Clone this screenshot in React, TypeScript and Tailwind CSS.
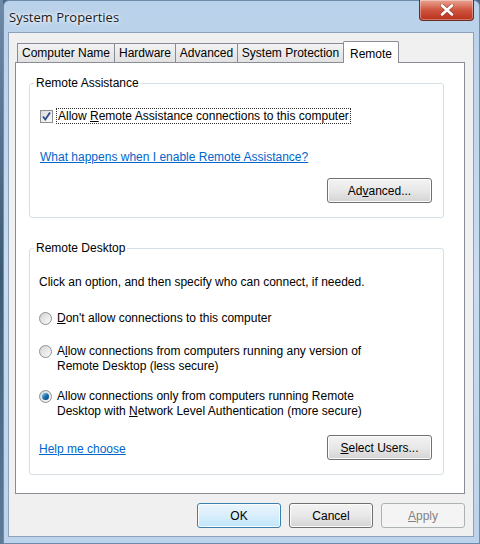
import React from "react";

const sans = "font-['Liberation_Sans',Arial,sans-serif]";

function Btn({ label, u, className = "" }: { label: string; u?: number; className?: string }) {
  const text =
    u === undefined ? (
      label
    ) : (
      <>
        {label.slice(0, u)}
        <span className="underline">{label[u]}</span>
        {label.slice(u + 1)}
      </>
    );
  return (
    <div
      className={`h-[25px] flex items-center justify-center rounded-[3px] border border-[#707070] bg-gradient-to-b from-[#f3f3f3] via-[#e8e8e8] to-[#d4d4d4] text-[12px] text-black shadow-[inset_0_0_0_1px_#fcfcfc] ${className}`}
    >
      {text}
    </div>
  );
}

function Radio({ checked }: { checked?: boolean }) {
  return (
    <div className="w-[13px] h-[13px] shrink-0 rounded-full border border-[#8e8f8f] bg-gradient-to-br from-[#d4d4d4] to-[#fbfbfb] flex items-center justify-center">
      {checked && (
        <div className="w-[7px] h-[7px] rounded-full bg-gradient-to-br from-[#8ad2f8] via-[#1a6fb0] to-[#0b3a6e]" />
      )}
    </div>
  );
}

function Tab({ label, w, active }: { label: string; w: number; active?: boolean }) {
  if (active) {
    return (
      <div
        style={{ width: w }}
        className="h-[22px] -mb-px -ml-px z-10 bg-white border border-b-0 border-[#898c95] rounded-t-[2px] flex items-start justify-center pt-[3px] text-[12px]"
      >
        {label}
      </div>
    );
  }
  return (
    <div
      style={{ width: w }}
      className="h-[19px] mt-[2px] -ml-px first:ml-0 border border-b-0 border-[#898c95] bg-gradient-to-b from-[#f3f3f3] to-[#e1e1e1] flex items-center justify-center text-[12px]"
    >
      {label}
    </div>
  );
}

export default function App() {
  return (
    <div className={`w-[480px] h-[544px] flex bg-[#4a6884] overflow-hidden ${sans} text-black`}>
      <div className="w-[3px] bg-gradient-to-b from-[#6f8aa6] via-[#3d5a77] to-[#5d7a97]" />
      <div className="flex-1 flex flex-col rounded-t-[6px] bg-gradient-to-b from-[#b9d1ea] via-[#c9dcf0] to-[#bcd3eb] border border-[#6d8bab] pl-[4px] pr-[5px] pb-[6px]">
        {/* title bar */}
        <div className="h-[31px] flex items-start justify-between">
          <div className="pt-[7px] pl-[1px] text-[13px] font-['Open_Sans',sans-serif] text-[#1b1b1b] [text-shadow:0_0_6px_#ffffff,0_0_3px_#ffffff]">
            System Properties
          </div>
          <div className="-mt-px w-[55px] h-[21px] rounded-b-[4px] border border-t-0 border-[#6c2a22] bg-gradient-to-b from-[#e8a493] via-[#d0543f] to-[#b8301b] flex items-center justify-center shadow-[inset_0_0_0_1px_rgba(255,255,255,0.35)]">
            <svg width="14" height="12" viewBox="0 0 14 12">
              <path d="M2 1.5 L12 10.5 M12 1.5 L2 10.5" stroke="#3a1a14" strokeWidth="4" strokeLinecap="round" opacity="0.35" />
              <path d="M2 1.5 L12 10.5 M12 1.5 L2 10.5" stroke="#ffffff" strokeWidth="2.6" strokeLinecap="round" />
            </svg>
          </div>
        </div>

        {/* client area */}
        <div className="flex-1 flex flex-col bg-[#f0f0f0] border border-[#8da2ba] pt-[7px] pl-[6px] pr-[8px]">
          <div className="flex items-end pl-[2px] h-[22px]">
            <Tab label="Computer Name" w={98} />
            <Tab label="Hardware" w={62} />
            <Tab label="Advanced" w={63} />
            <Tab label="System Protection" w={107} />
            <Tab label="Remote" w={56} active />
          </div>

          <div className="h-[432px] bg-white border border-[#898c95] pt-[13px] pl-[13px] pr-[20px]">
            {/* Remote Assistance */}
            <fieldset className="h-[142px] border border-[#d5dfe5] rounded-[3px] pl-[10px] pr-[11px] text-[12px]">
              <legend className="-ml-[6px] px-[2px] leading-[14px]">Remote Assistance</legend>
              <div className="mt-[18px] flex items-center gap-[3px] h-[16px]">
                <div className="w-[13px] h-[13px] shrink-0 border border-[#8e8f8f] bg-gradient-to-br from-[#dcdcdc] to-[#fafafa] flex items-center justify-center">
                  <svg width="11" height="11" viewBox="0 0 11 11">
                    <path d="M2 5.5 L4.3 8.5 L9 1.5" stroke="#2c4a8c" strokeWidth="1.8" fill="none" />
                  </svg>
                </div>
                <span className="whitespace-nowrap border border-dotted border-[#333] px-px leading-[14px]">
                  Allow <span className="underline">R</span>emote Assistance connections to this computer
                </span>
              </div>
              <div className="mt-[26px] leading-[14px] text-[#0066cc] underline">
                What happens when I enable Remote Assistance?
              </div>
              <div className="mt-[14px] flex justify-end">
                <Btn label="Advanced..." u={2} className="w-[105px]" />
              </div>
            </fieldset>

            {/* Remote Desktop */}
            <fieldset className="mt-[23px] h-[234px] border border-[#d5dfe5] rounded-[3px] pl-[9px] pr-[11px] text-[12px]">
              <legend className="-ml-[5px] px-[2px] leading-[14px]">Remote Desktop</legend>
              <div className="mt-[20px] leading-[14px]">
                Click an option, and then specify who can connect, if needed.
              </div>
              <div className="mt-[22px] flex items-center gap-[5px] leading-[14px]">
                <Radio />
                <span>
                  <span className="underline">D</span>on't allow connections to this computer
                </span>
              </div>
              <div className="mt-[19px] flex items-start gap-[5px] leading-[15px]">
                <div className="mt-px">
                  <Radio />
                </div>
                <span>
                  A<span className="underline">l</span>low connections from computers running any version of
                  <br />
                  Remote Desktop (less secure)
                </span>
              </div>
              <div className="mt-[15px] flex items-start gap-[5px] leading-[15px]">
                <div className="mt-px">
                  <Radio checked />
                </div>
                <span>
                  Allow connections only from computers running Remote
                  <br />
                  Desktop with <span className="underline">N</span>etwork Level Authentication (more secure)
                </span>
              </div>
              <div className="mt-[16px] flex items-center justify-between">
                <span className="text-[#0066cc] underline mt-[3px]">Help me choose</span>
                <Btn label="Select Users..." u={0} className="w-[105px]" />
              </div>
            </fieldset>
          </div>

          <div className="mt-[9px] flex justify-end gap-[8px]">
            <Btn
              label="OK"
              className="w-[84px] !border-[#3c7fb1] !from-[#eaf6fd] !via-[#d9eefb] !to-[#bee6fd] shadow-[inset_0_0_0_1px_#a7d9f5]"
            />
            <Btn label="Cancel" className="w-[84px]" />
            <div className="w-[84px] h-[25px] flex items-center justify-center rounded-[3px] border border-[#adb2b5] bg-[#f4f4f4] text-[12px] text-[#838383]">
              <span className="underline">A</span>pply
            </div>
          </div>
        </div>
      </div>
    </div>
  );
}
